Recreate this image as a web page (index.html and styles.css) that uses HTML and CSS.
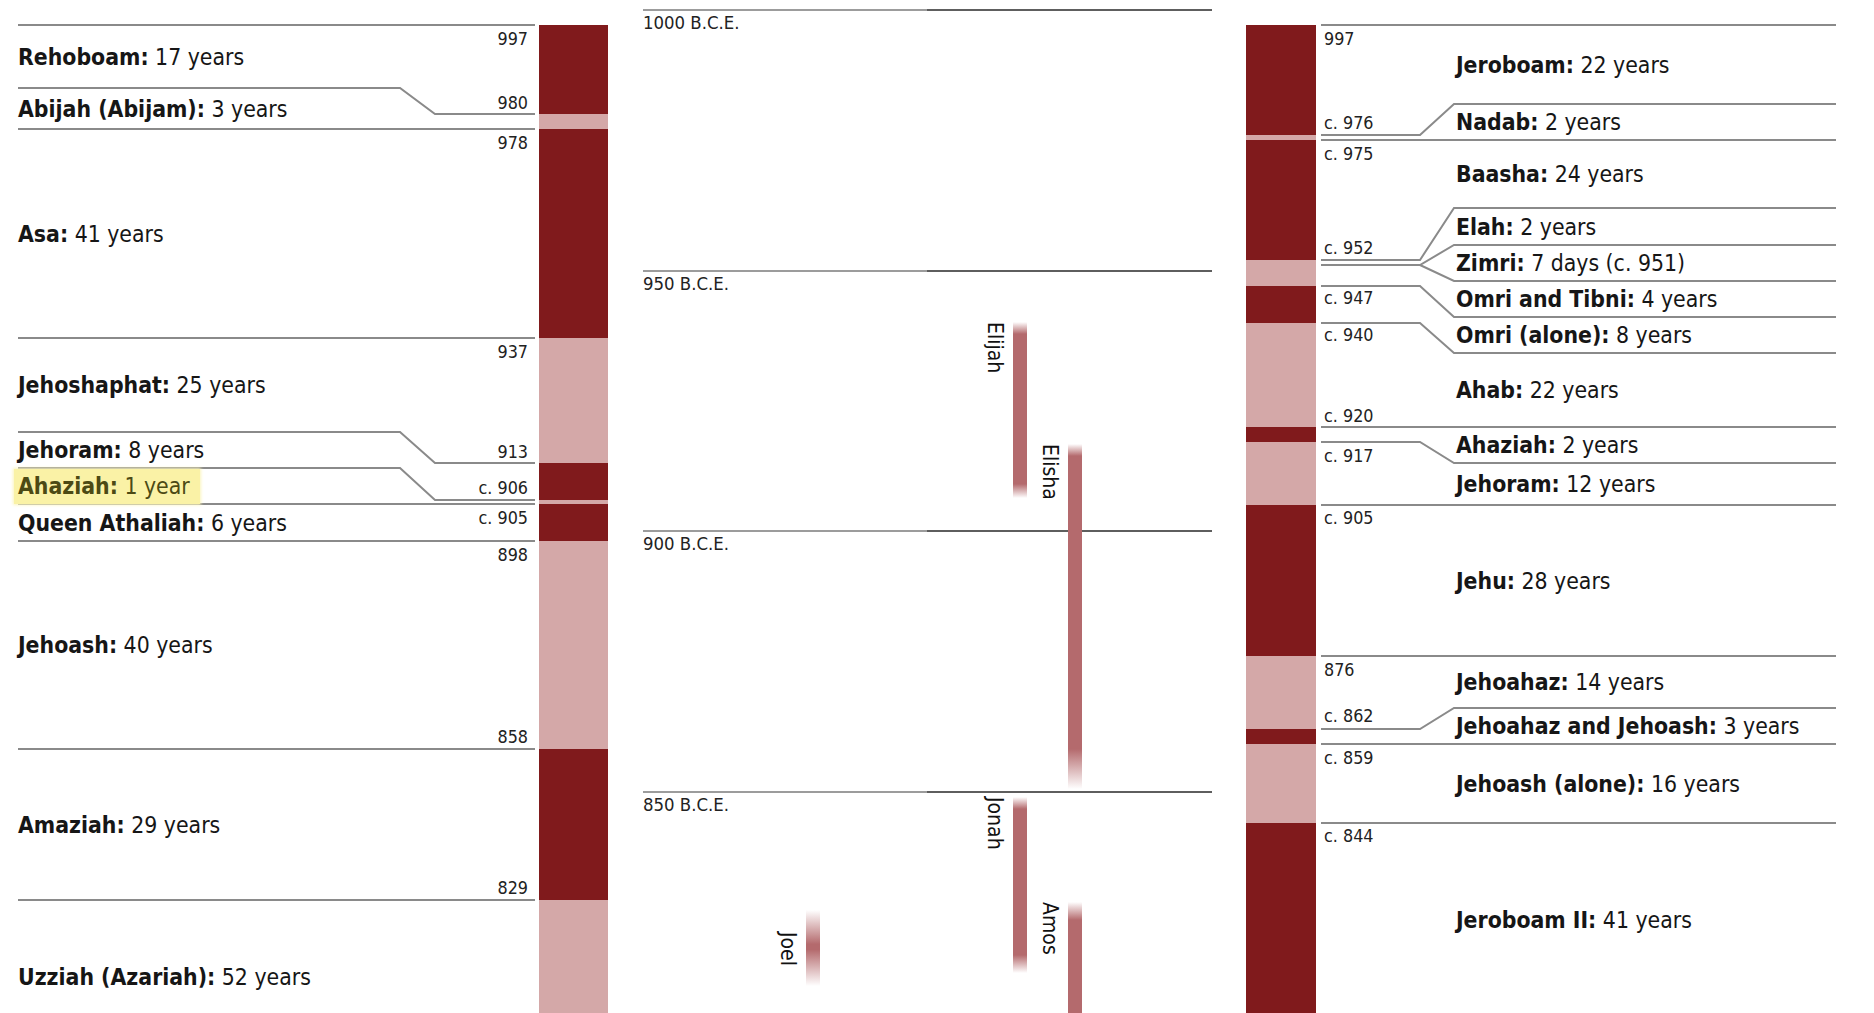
FILE: index.html
```html
<!DOCTYPE html>
<html lang="en">
<head>
<meta charset="utf-8">
<title>Kings of Judah and Israel</title>
<link rel="stylesheet" href="styles.css">
</head>
<body>
<div class="chart">

  <!-- Judah (left) -->
  <section class="side judah">
    <div class="list">
      <svg class="lines" width="517" height="1013" viewBox="0 0 517 1013">
        <g fill="none" stroke="#8a8a8a" stroke-width="2">
          <line x1="0" y1="25" x2="517" y2="25"/>
          <polyline points="0,88 382,88 417,114 517,114"/>
          <line x1="0" y1="129" x2="517" y2="129"/>
          <line x1="0" y1="338" x2="517" y2="338"/>
          <polyline points="0,432 382,432 417,463 517,463"/>
          <polyline points="0,468 382,468 417,500 517,500"/>
          <line x1="0" y1="504" x2="517" y2="504"/>
          <line x1="0" y1="541" x2="517" y2="541"/>
          <line x1="0" y1="749" x2="517" y2="749"/>
          <line x1="0" y1="900" x2="517" y2="900"/>
        </g>
      </svg>
      <div class="rows">
        <div class="row" style="height:63px"><span><b>Rehoboam:</b> 17 years</span></div>
        <div class="row" style="height:41px"><span><b>Abijah (Abijam):</b> 3 years</span></div>
        <div class="row" style="height:209px"><span><b>Asa:</b> 41 years</span></div>
        <div class="row" style="height:94px"><span><b>Jehoshaphat:</b> 25 years</span></div>
        <div class="row" style="height:36px"><span><b>Jehoram:</b> 8 years</span></div>
        <div class="row" style="height:36px"><span class="hl"><b>Ahaziah:</b> 1 year</span></div>
        <div class="row" style="height:37px"><span><b>Queen Athaliah:</b> 6 years</span></div>
        <div class="row" style="height:208px"><span><b>Jehoash:</b> 40 years</span></div>
        <div class="row" style="height:151px"><span><b>Amaziah:</b> 29 years</span></div>
        <div class="row" style="height:154px"><span><b>Uzziah (Azariah):</b> 52 years</span></div>
      </div>
      <span class="yr" style="top:29px">997</span>
      <span class="yr" style="top:93px">980</span>
      <span class="yr" style="top:133px">978</span>
      <span class="yr" style="top:342px">937</span>
      <span class="yr" style="top:442px">913</span>
      <span class="yr" style="top:478px">c. 906</span>
      <span class="yr" style="top:508px">c. 905</span>
      <span class="yr" style="top:545px">898</span>
      <span class="yr" style="top:727px">858</span>
      <span class="yr" style="top:878px">829</span>
    </div>
    <div class="bar">
      <i class="dk" style="height:89px"></i>
      <i class="lt" style="height:15px"></i>
      <i class="dk" style="height:209px"></i>
      <i class="lt" style="height:125px"></i>
      <i class="dk" style="height:37px"></i>
      <i class="lt" style="height:4px"></i>
      <i class="dk" style="height:37px"></i>
      <i class="lt" style="height:208px"></i>
      <i class="dk" style="height:151px"></i>
      <i class="lt" style="height:113px"></i>
    </div>
  </section>

  <!-- Time axis with prophets (middle) -->
  <section class="axis">
    <div class="era"><div class="rule"></div><div class="era-label">1000 B.C.E.</div></div>
    <div class="era"><div class="rule"></div><div class="era-label">950 B.C.E.</div></div>
    <div class="era"><div class="rule"></div><div class="era-label">900 B.C.E.</div></div>
    <div class="era"><div class="rule"></div><div class="era-label">850 B.C.E.</div></div>

    <div class="prophet" style="left:340px;top:322px"><span class="pname">Elijah</span><span class="pbar fade-both" style="height:176px"></span></div>
    <div class="prophet" style="left:395px;top:444px"><span class="pname">Elisha</span><span class="pbar fade-long-end" style="height:345px"></span></div>
    <div class="prophet" style="left:340px;top:797px"><span class="pname">Jonah</span><span class="pbar fade-both2" style="height:176px"></span></div>
    <div class="prophet" style="left:395px;top:902px"><span class="pname">Amos</span><span class="pbar fade-start" style="height:120px"></span></div>
    <div class="prophet" style="left:133px;top:910px"><span class="pname joel">Joel</span><span class="pbar fade-peak" style="height:76px"></span></div>
  </section>

  <!-- Israel (right) -->
  <section class="side israel">
    <div class="bar">
      <i class="dk" style="height:110px"></i>
      <i class="lt" style="height:5px"></i>
      <i class="dk" style="height:120px"></i>
      <i class="lt" style="height:26px"></i>
      <i class="dk" style="height:37px"></i>
      <i class="lt" style="height:104px"></i>
      <i class="dk" style="height:15px"></i>
      <i class="lt" style="height:63px"></i>
      <i class="dk" style="height:151px"></i>
      <i class="lt" style="height:73px"></i>
      <i class="dk" style="height:15px"></i>
      <i class="lt" style="height:79px"></i>
      <i class="dk" style="height:190px"></i>
    </div>
    <div class="list">
      <svg class="lines" width="515" height="1013" viewBox="0 0 515 1013">
        <g fill="none" stroke="#8a8a8a" stroke-width="2">
          <line x1="0" y1="25" x2="515" y2="25"/>
          <polyline points="0,135 99,135 133,104 515,104"/>
          <line x1="0" y1="140" x2="515" y2="140"/>
          <polyline points="0,260 99,260 133,208 515,208"/>
          <polyline points="0,265 99,265 133,245 515,245"/>
          <polyline points="99,265 133,281 515,281"/>
          <polyline points="0,286 99,286 133,317 515,317"/>
          <polyline points="0,323 99,323 133,353 515,353"/>
          <line x1="0" y1="427" x2="515" y2="427"/>
          <polyline points="0,442 99,442 133,463 515,463"/>
          <line x1="0" y1="505" x2="515" y2="505"/>
          <line x1="0" y1="656" x2="515" y2="656"/>
          <polyline points="0,729 99,729 133,708 515,708"/>
          <line x1="0" y1="744" x2="515" y2="744"/>
          <line x1="0" y1="823" x2="515" y2="823"/>
        </g>
      </svg>
      <div class="rows">
        <div class="row" style="height:79px"><span><b>Jeroboam:</b> 22 years</span></div>
        <div class="row" style="height:36px"><span><b>Nadab:</b> 2 years</span></div>
        <div class="row" style="height:68px"><span><b>Baasha:</b> 24 years</span></div>
        <div class="row" style="height:37px"><span><b>Elah:</b> 2 years</span></div>
        <div class="row" style="height:36px"><span><b>Zimri:</b> 7 days (c. 951)</span></div>
        <div class="row" style="height:36px"><span><b>Omri and Tibni:</b> 4 years</span></div>
        <div class="row" style="height:36px"><span><b>Omri (alone):</b> 8 years</span></div>
        <div class="row" style="height:74px"><span><b>Ahab:</b> 22 years</span></div>
        <div class="row" style="height:36px"><span><b>Ahaziah:</b> 2 years</span></div>
        <div class="row" style="height:42px"><span><b>Jehoram:</b> 12 years</span></div>
        <div class="row" style="height:151px"><span><b>Jehu:</b> 28 years</span></div>
        <div class="row" style="height:52px"><span><b>Jehoahaz:</b> 14 years</span></div>
        <div class="row" style="height:36px"><span><b>Jehoahaz and Jehoash:</b> 3 years</span></div>
        <div class="row" style="height:79px"><span><b>Jehoash (alone):</b> 16 years</span></div>
        <div class="row" style="height:194px"><span><b>Jeroboam II:</b> 41 years</span></div>
      </div>
      <span class="yr" style="top:29px">997</span>
      <span class="yr" style="top:113px">c. 976</span>
      <span class="yr" style="top:144px">c. 975</span>
      <span class="yr" style="top:238px">c. 952</span>
      <span class="yr" style="top:288px">c. 947</span>
      <span class="yr" style="top:325px">c. 940</span>
      <span class="yr" style="top:406px">c. 920</span>
      <span class="yr" style="top:446px">c. 917</span>
      <span class="yr" style="top:508px">c. 905</span>
      <span class="yr" style="top:660px">876</span>
      <span class="yr" style="top:706px">c. 862</span>
      <span class="yr" style="top:748px">c. 859</span>
      <span class="yr" style="top:826px">c. 844</span>
    </div>
  </section>

</div>
</body>
</html>
```

FILE: styles.css
```css
html, body {
  margin: 0;
  padding: 0;
  background: #ffffff;
}

body {
  font-family: "DejaVu Sans Condensed", "DejaVu Sans", "Liberation Sans", sans-serif;
  font-stretch: condensed;
  color: #161616;
  overflow: hidden;
}

.chart {
  display: flex;
  align-items: flex-start;
  height: 1013px;
  overflow: hidden;
}

.side {
  display: flex;
  height: 1013px;
}

.judah {
  margin-left: 18px;
  gap: 4px;
}

.israel {
  margin-left: 34px;
  gap: 5px;
}

.list {
  position: relative;
  height: 1013px;
}

.judah .list { width: 517px; }
.israel .list { width: 515px; }

.lines {
  position: absolute;
  top: 0;
  left: 0;
  pointer-events: none;
}

.rows {
  position: relative;
  display: flex;
  flex-direction: column;
  padding-top: 25px;
}

.row {
  display: flex;
  align-items: center;
  flex-shrink: 0;
  font-size: 22.8px;
  line-height: 26px;
  white-space: nowrap;
}

.israel .row {
  padding-left: 135px;
}

.row b {
  font-weight: bold;
}

.hl {
  background: #faf2a6;
  color: #4c4a14;
  margin-left: -4px;
  padding: 4px 10px 5px 4px;
  box-shadow: 0 0 3px 1px #fbf5bd;
}

.yr {
  position: absolute;
  font-size: 17.8px;
  line-height: 20px;
  color: #222;
  white-space: nowrap;
}

.judah .yr { right: 7px; }
.israel .yr { left: 3px; }

.bar {
  display: flex;
  flex-direction: column;
  padding-top: 25px;
}

.judah .bar { width: 69px; }
.israel .bar { width: 70px; }

.bar i {
  display: block;
  flex-shrink: 0;
}

.bar .dk { background: #801a1c; }
.bar .lt { background: #d4a8a8; }

/* middle axis */
.axis {
  position: relative;
  margin-left: 35px;
  width: 569px;
  height: 1013px;
  padding-top: 9px;
  box-sizing: border-box;
}

.era {
  height: 260.5px;
}

.rule {
  height: 2px;
  background: linear-gradient(to right, #9c9c9c 0, #9c9c9c 50%, #5e5e5e 50%, #5e5e5e 100%);
}

.era-label {
  margin-top: 2px;
  font-size: 18.4px;
  line-height: 20px;
  color: #222;
}

.prophet {
  position: absolute;
  display: flex;
  align-items: flex-start;
  gap: 7px;
}

.pname {
  writing-mode: vertical-rl;
  font-size: 21px;
  line-height: 23px;
  color: #111;
  white-space: nowrap;
}

.pname.joel {
  margin-top: 22px;
}

.pbar {
  display: block;
  width: 14px;
}

.fade-both {
  background: linear-gradient(to bottom, rgba(180,106,109,0) 0, #b46a6d 12px, #b46a6d calc(100% - 14px), rgba(180,106,109,0) 100%);
}

.fade-both2 {
  background: linear-gradient(to bottom, rgba(180,106,109,0) 0, #b46a6d 12px, #b46a6d calc(100% - 18px), rgba(180,106,109,0) 100%);
}

.fade-long-end {
  background: linear-gradient(to bottom, rgba(180,106,109,0) 0, #b46a6d 12px, #b46a6d calc(100% - 40px), rgba(180,106,109,0) 100%);
}

.fade-start {
  background: linear-gradient(to bottom, rgba(180,106,109,0) 0, #b46a6d 18px, #b46a6d 100%);
}

.fade-peak {
  background: linear-gradient(to bottom, rgba(180,106,109,0) 0, #b46a6d 45%, #b46a6d 52%, rgba(180,106,109,0) 100%);
}
```
